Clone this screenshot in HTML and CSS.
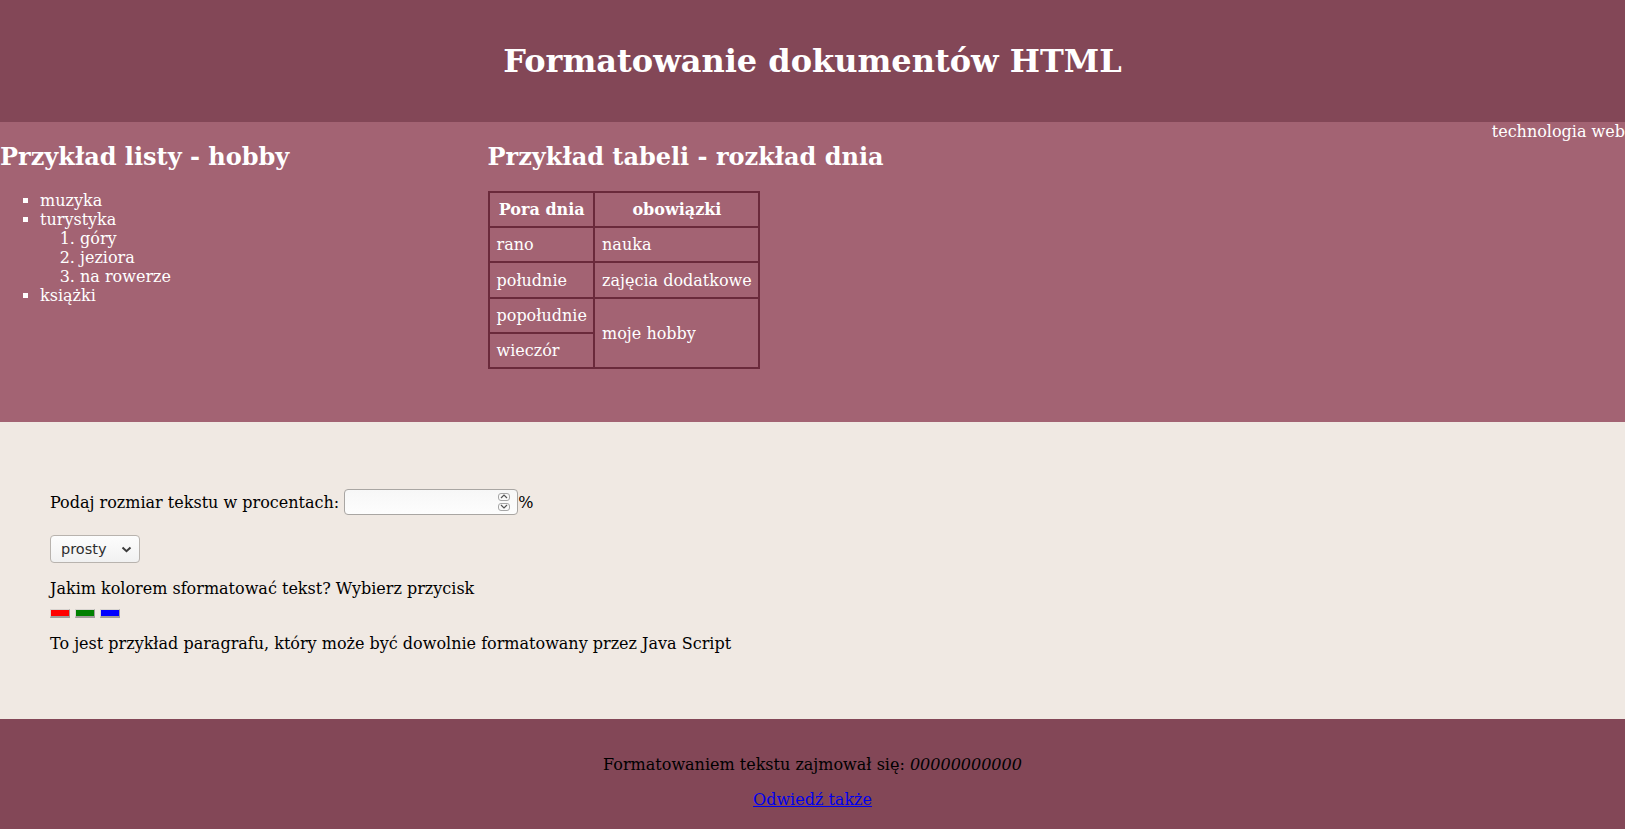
FILE: index.html
```html
<!DOCTYPE html>
<html lang="pl">
<head>
<meta charset="utf-8">
<title>Formatowanie dokumentów HTML</title>
<link rel="stylesheet" href="styles.css">
</head>
<body>
<header class="top">
  <h1>Formatowanie dokumentów HTML</h1>
</header>

<section class="middle">
  <div class="col-list">
    <h2>Przykład listy - hobby</h2>
    <ul class="hobby">
      <li>muzyka</li>
      <li>turystyka
        <ol>
          <li>góry</li>
          <li>jeziora</li>
          <li>na rowerze</li>
        </ol>
      </li>
      <li>książki</li>
    </ul>
  </div>
  <div class="col-table">
    <h2>Przykład tabeli - rozkład dnia</h2>
    <table class="day">
      <tr><th>Pora dnia</th><th>obowiązki</th></tr>
      <tr><td>rano</td><td>nauka</td></tr>
      <tr><td>południe</td><td>zajęcia dodatkowe</td></tr>
      <tr><td>popołudnie</td><td rowspan="2">moje hobby</td></tr>
      <tr><td>wieczór</td></tr>
    </table>
  </div>
  <div class="col-tech">technologia web</div>
</section>

<section class="light">
  <p class="size-row">Podaj rozmiar tekstu w procentach: <span class="num"><input type="text" class="num-input"><span class="spin"><span class="spin-btn"><svg width="8" height="5" viewBox="0 0 8 5"><polyline points="1,4 4,1 7,4" fill="none" stroke="#555" stroke-width="1.2"/></svg></span><span class="spin-btn"><svg width="8" height="5" viewBox="0 0 8 5"><polyline points="1,1 4,4 7,1" fill="none" stroke="#555" stroke-width="1.2"/></svg></span></span></span>%</p>
  <div class="style-row">
    <span class="select-wrap">
      <select class="style-select"><option>prosty</option><option>pogrubiony</option><option>kursywa</option></select>
      <svg class="chev" width="11" height="7" viewBox="0 0 11 7"><polyline points="1.5,1.5 5.5,5.2 9.5,1.5" fill="none" stroke="#3c3c3c" stroke-width="2"/></svg>
    </span>
  </div>
  <div class="color-block">
    <div class="color-q">Jakim kolorem sformatować tekst? Wybierz przycisk</div>
    <div class="swatches">
      <button class="sw sw-red" type="button"></button>
      <button class="sw sw-green" type="button"></button>
      <button class="sw sw-blue" type="button"></button>
    </div>
  </div>
  <p class="sample">To jest przykład paragrafu, który może być dowolnie formatowany przez Java Script</p>
</section>

<footer class="bottom">
  <p>Formatowaniem tekstu zajmował się: <em>00000000000</em></p>
  <p><a href="#">Odwiedź także</a></p>
</footer>
</body>
</html>
```

FILE: styles.css
```css
html, body {
  margin: 0;
  padding: 0;
}
body {
  font-family: "DejaVu Serif", serif;
  font-size: 16px;
  color: #000;
  background: #f0e9e3;
}

.top {
  background: #834757;
  padding: 20.5px 0;
  text-align: center;
}
.top h1 {
  margin: 21.4px 0;
  font-size: 32px;
  font-weight: bold;
  color: #fff;
}

.middle {
  background: #a36373;
  height: 300px;
  box-sizing: border-box;
  display: grid;
  grid-template-columns: 30% 1fr auto;
  align-items: start;
  color: #fff;
}
.middle h2 {
  font-size: 24px;
  margin: 19.9px 0;
  color: #fff;
}
.hobby {
  list-style-type: square;
  padding-left: 40px;
  margin: 16px 0;
}
.hobby ol {
  padding-left: 40px;
  margin: 0;
}
.col-tech {
  text-align: right;
  white-space: nowrap;
}

.day {
  border-collapse: collapse;
  border: 2px solid #6a2a3b;
}
.day th, .day td {
  border: 2px solid #6a2a3b;
  padding: 7.2px 6.2px 7.2px 7px;
  text-align: left;
  vertical-align: middle;
}
.day th {
  text-align: center;
  font-weight: bold;
}

.light {
  padding: 51px 50px 50px;
}
.light p {
  margin: 16px 0;
}
.size-row {
  margin-top: 16px;
}
.num {
  display: inline-block;
  overflow: hidden;
  vertical-align: -7px;
  width: 174px;
  height: 26px;
  box-sizing: border-box;
  border: 1px solid #a9a6a3;
  border-radius: 4px;
  background: linear-gradient(#f7f7f7, #fdfdfd);
  position: relative;
}
.num-input {
  border: 0;
  background: transparent;
  width: 150px;
  height: 24px;
  padding: 0 6px;
  box-sizing: border-box;
  outline: none;
}
.spin {
  position: absolute;
  right: 7px;
  top: 3px;
  display: flex;
  flex-direction: column;
  gap: 2px;
}
.spin-btn {
  width: 12px;
  height: 8px;
  box-sizing: border-box;
  border: 1px solid #a6a6a6;
  border-radius: 3px;
  background: #fafafa;
  display: flex;
  align-items: center;
  justify-content: center;
}
.spin-btn svg {
  display: block;
}

.style-row {
  padding-top: 4px;
}
.select-wrap {
  display: inline-block;
  position: relative;
  vertical-align: top;
}
.style-select {
  -webkit-appearance: none;
  appearance: none;
  display: block;
  width: 90px;
  height: 28px;
  box-sizing: border-box;
  border: 1px solid #b8b3ae;
  border-radius: 4px;
  background: linear-gradient(#fdfdfd, #f1f1f1);
  font-family: "DejaVu Sans", sans-serif;
  font-size: 14.5px;
  color: #2e2e2e;
  padding: 0 0 0 10px;
  margin: 0;
}
.chev {
  position: absolute;
  right: 8px;
  top: 11px;
  pointer-events: none;
}

.color-block {
  margin-top: 16px;
}
.swatches {
  display: flex;
  gap: 5px;
  margin-top: 11px;
}
.sw {
  width: 20px;
  height: 9px;
  padding: 0;
  margin: 0;
  box-sizing: border-box;
  border-style: solid;
  border-width: 1px 1px 2px 1px;
  border-color: #d8d4d0 #a09d9a #a09d9a #d8d4d0;
  border-radius: 0;
}
.sw-red { background: #ff0000; }
.sw-green { background: #008000; }
.sw-blue { background: #0000ff; }

.sample {
  margin-top: 16px;
}

.bottom {
  background: #834757;
  padding: 20px 0;
  text-align: center;
  color: #000;
}
.bottom p {
  margin: 16px 0;
}
.bottom a {
  color: #0000ee;
}
```
